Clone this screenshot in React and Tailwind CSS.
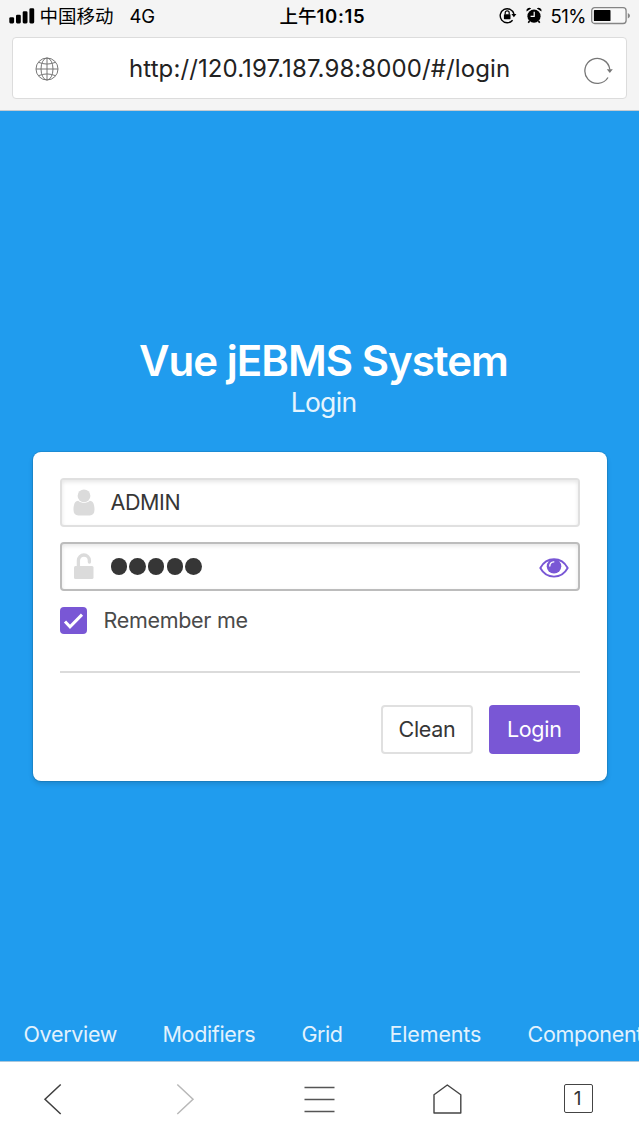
import React from "react";

function StatusBar() {
  return (
    <div className="flex h-8 items-center pl-[9px] text-black">
      <svg className="h-4 w-[26px] shrink-0" viewBox="0 0 26 16">
        <rect x="0.3" y="9.2" width="4.8" height="6.2" rx="1.3" />
        <rect x="7" y="6.8" width="4.8" height="8.6" rx="1.3" />
        <rect x="13.7" y="3.2" width="4.8" height="12.2" rx="1.3" />
        <rect x="20.4" y="0.2" width="4.8" height="15.2" rx="1.3" />
      </svg>
      <span className="ml-[4.5px] w-[90px] shrink-0 text-[18.5px] leading-8">中国移动</span>
      <span className="w-[150px] shrink-0 text-[18.5px] leading-8 tracking-[-0.2px]">4G</span>
      <span className="w-[219px] shrink-0 text-[18.5px] font-semibold leading-8">
        <span className="font-medium">上午</span>
        <span className="tracking-[0.7px]">10:15</span>
      </span>
      <svg className="h-[18px] w-[18px] shrink-0" viewBox="0 0 18 18" fill="none" stroke="#000">
        <path d="M13.6 13.2A7 7 0 1 1 15 7" strokeWidth="1.4" />
        <path d="M12.4 7.100h5l-2.500 3.200z" fill="#000" stroke="none" />
        <rect x="4.900" y="7.300" width="6.600" height="4.900" rx="0.600" fill="#000" stroke="none" />
        <path d="M6.200 7.500V5.800a2 2 0 0 1 4 0V7.500" strokeWidth="1.200" />
      </svg>
      <svg className="ml-[9.5px] h-[18px] w-[16px] shrink-0" viewBox="0 0 16 18">
        <circle cx="8" cy="9.200" r="6.600" />
        <path d="M0.500 4.500A3 3 0 0 1 5.200 1.400zM15.500 4.500A3 3 0 0 0 10.800 1.400z" />
        <path d="M3.500 14L2.300 15.700M12.500 14L13.700 15.700" stroke="#000" strokeWidth="1.600" />
        <path d="M8.200 4.800v4.600H4.600" fill="none" stroke="#fff" strokeWidth="1.200" />
      </svg>
      <span className="ml-[8.5px] w-10 shrink-0 text-[18.5px] leading-8 tracking-[-0.5px]">51%</span>
      <svg className="h-[18px] w-[40px] shrink-0" viewBox="0 0 40 18">
        <rect x="0.700" y="0.700" width="34.400" height="15.800" rx="3" fill="#f8f8f8" stroke="#858585" strokeWidth="1.300" />
        <rect x="2.900" y="3.100" width="16.600" height="11" rx="0.700" />
        <path d="M36.800 5.900q2.200 1 2.200 2.800t-2.200 2.800z" fill="#858585" />
      </svg>
    </div>
  );
}

function AddressBar() {
  return (
    <div className="mx-3 mt-[5px] flex h-[62px] items-center rounded-[4px] border border-[#dcdcdc] bg-white">
      <svg className="ml-[21.500px] mt-px h-6 w-6 shrink-0" viewBox="0 0 24 24" fill="none" stroke="#777" strokeWidth="1">
        <circle cx="12" cy="12" r="11" />
        <ellipse cx="12" cy="12" rx="6" ry="11" />
        <path d="M12 1v22M1 12h22M3.500 5.300q8.500 3.500 17 0M3.500 18.700q8.500-3.500 17 0" />
      </svg>
      <span className="ml-[70.500px] w-[454px] shrink-0 pt-px text-[24px] leading-8 tracking-[0.100px] text-[#222]">
        http://120.197.187.98:8000/#/login
      </span>
      <svg className="mt-[6px] h-7 w-[30px] shrink-0" viewBox="-0.500 0 30 28" fill="none" stroke="#777">
        <path d="M24.500 20.500A12.500 12.500 0 1 1 26.300 12.500" strokeWidth="1.300" />
        <path d="M23.300 12.300h6l-3 3.700z" fill="#777" stroke="none" />
      </svg>
    </div>
  );
}

function Field({ icon, children, active }) {
  return (
    <div
      className={
        "flex h-[49px] items-center rounded-[4px] border-2 bg-white pl-[11px] pr-[9px] shadow-[inset_0_2px_4px_rgba(10,10,10,0.1)] " +
        (active ? "border-[#bcbcbc]" : "border-[#e0e0e0]")
      }
    >
      {icon}
      {children}
    </div>
  );
}

function LoginCard() {
  return (
    <section className="ml-[32.500px] mr-[32.500px] mt-[32px] h-[329px] rounded-[8px] bg-white px-[27px] pt-[26px] shadow-[0_3px_5px_rgba(10,10,10,0.13),0_0_0_1px_rgba(10,10,10,0.1)]">
      <Field
        icon={
          <svg className="h-[27px] w-[22px] shrink-0" viewBox="0 0 22 27" fill="#dbdbdb">
            <path d="M5.200 11.800C1.800 12 .5 15.500 .5 20.800c0 3.700 1.800 5.600 4.800 5.600h11.400c3 0 4.800-1.900 4.800-5.600 0-5.300-1.300-8.800-4.700-9-1.500 1.300-3.500 2.100-5.800 2.100s-4.300-.8-5.800-2.100z" />
            <circle cx="11" cy="6.800" r="6.400" />
          </svg>
        }
      >
        <span className="-mt-0.5 ml-[16px] text-[21.500px] leading-8 tracking-[-0.400px] text-[#363636]">ADMIN</span>
      </Field>
      <div className="h-[15px]" />
      <Field
        active
        icon={
          <svg className="h-[27px] w-[22px] shrink-0" viewBox="0 0 22 27">
            <rect x="1" y="13" width="19.500" height="13" rx="1.500" fill="#dbdbdb" />
            <path d="M5.400 14V7.500a5.500 5.500 0 0 1 11 0v1.600" fill="none" stroke="#dbdbdb" strokeWidth="3.300" strokeLinecap="round" />
          </svg>
        }
      >
        <div className="ml-4 flex grow gap-[2.200px]">
          {[0, 1, 2, 3, 4].map((dot) => (
            <span key={dot} className="h-[16.500px] w-[16.500px] rounded-full bg-[#363636]" />
          ))}
        </div>
        <svg className="mt-[3px] h-5 w-[30px] shrink-0" viewBox="0 0 30 20">
          <path d="M1.300 10Q6 1.300 15 1.300T28.700 10Q24 18.600 15 18.600T1.300 10z" fill="none" stroke="#7957d5" strokeWidth="1.900" strokeLinejoin="round" />
          <circle cx="15" cy="8.300" r="7.300" fill="#7957d5" />
          <path d="M10.800 8.100Q10.800 4.200 14.800 3.900" fill="none" stroke="#fff" strokeWidth="1.400" strokeLinecap="round" />
        </svg>
      </Field>
      <div className="mt-[15px] flex h-7 items-center">
        <span className="flex h-[27px] w-[27px] items-center justify-center rounded-[4px] bg-[#7957d5]">
          <svg className="h-[27px] w-[27px]" viewBox="0 0 27 27" fill="none" stroke="#fff" strokeWidth="3">
            <path d="M5 14.500L10 19.800L22 7.600" />
          </svg>
        </span>
        <span className="-mt-px ml-[17px] text-[21.500px] leading-7 tracking-[-0.300px] text-[#4a4a4a]">Remember me</span>
      </div>
      <div className="mt-[37px] h-[1.500px] bg-[#dbdbdb]" />
      <div className="mt-[32.500px] flex justify-end gap-4">
        <button className="h-[49px] w-[92px] rounded-[4px] border-2 border-[#e0e0e0] bg-white pb-px text-[21.500px] tracking-[-0.300px] text-[#363636]">
          Clean
        </button>
        <button className="h-[49px] w-[90.500px] rounded-[4px] bg-[#7957d5] pb-px text-[21.500px] tracking-[-0.300px] text-white">
          Login
        </button>
      </div>
    </section>
  );
}

function PageLinks() {
  return (
    <nav className="flex h-[54px] items-center gap-[47px] pl-[23.500px] text-[21.500px] leading-8 tracking-[-0.330px] text-[#e2f2fd]">
      <span className="w-[92px] shrink-0">Overview</span>
      <span className="w-[92px] shrink-0">Modifiers</span>
      <span className="w-[41px] shrink-0 tracking-[-0.450px]">Grid</span>
      <span className="w-[91px] shrink-0 tracking-[-0.150px]">Elements</span>
      <span className="shrink-0">Components</span>
    </nav>
  );
}

function BrowserToolbar() {
  return (
    <footer className="flex h-[75px] items-center border-t border-[#a9c7dc] bg-white pb-px pl-[38px]">
      <svg className="h-8 w-8" viewBox="0 0 32 32" fill="none" stroke="#3f3f3f" strokeWidth="1.500">
        <path d="M22.700 1.500L7 16.300L22.700 31" />
      </svg>
      <svg className="ml-[100px] h-8 w-8" viewBox="0 0 32 32" fill="none" stroke="#b8b8b8" strokeWidth="1.500">
        <path d="M7.300 1.500L23 16.300L7.300 31" />
      </svg>
      <svg className="ml-[101px] h-8 w-8" viewBox="0 0 32 32" fill="none" stroke="#555" strokeWidth="1.500">
        <path d="M1.500 4.500h30M1.500 16.500h30M1.500 28.500h30" />
      </svg>
      <svg className="ml-24 h-8 w-8" viewBox="0 0 32 32" fill="none" stroke="#444" strokeWidth="1.400" strokeLinejoin="round">
        <path d="M3 11.800L16.300 2L29.800 11.800V30H3z" />
      </svg>
      <span className="ml-[101px] flex h-[29px] w-[29px] items-center justify-center rounded-[2px] border-[1.500px] border-[#444] pb-px pr-0.5 text-[19px] leading-none text-[#333]">
        1
      </span>
    </footer>
  );
}

export default function App() {
  return (
    <main className="flex h-[1136px] w-[639px] flex-col overflow-hidden bg-[#209cee] font-['Inter','Noto_Sans_CJK_SC',sans-serif]">
      <header className="h-[111px] shrink-0 border-b border-[#c4cbd0] bg-[#f4f4f4]">
        <StatusBar />
        <AddressBar />
      </header>
      <div className="flex grow flex-col">
        <div className="mt-[226px] pl-2 text-center">
          <h1 className="text-[42px] font-semibold leading-[48px] tracking-[-0.980px] text-white">Vue jEBMS System</h1>
          <p className="text-[26.500px] leading-[35px] tracking-[-0.700px] text-[#e6f4fd]">Login</p>
        </div>
        <LoginCard />
        <div className="grow" />
        <PageLinks />
      </div>
      <BrowserToolbar />
    </main>
  );
}
